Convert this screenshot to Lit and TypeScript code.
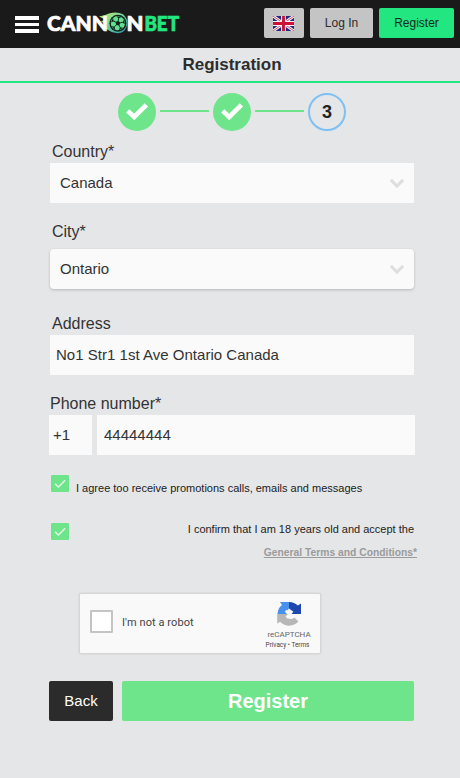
import { LitElement, html, css, svg } from "lit";
import { customElement } from "lit/decorators.js";

const chevron = html`<svg class="chevron" width="16" height="11" viewBox="0 0 16 11">
  <path d="M1.8 1.9 L8 8.1 L14.2 1.9" fill="none" stroke="#dedede" stroke-width="2.9" />
</svg>`;

const stepCheck = html`<svg width="38" height="38" viewBox="0 0 38 38">
  <path d="M9.7 17.8 L16.2 24 L28.4 11.8" fill="none" stroke="#fff" stroke-width="4.6" />
</svg>`;

const smallCheck = html`<svg class="box" width="18" height="17" viewBox="0 0 18 17">
  <rect width="18" height="17" rx="1" fill="#6ee58a" />
  <path d="M4 8.7 L7.4 12 L14.2 5.2" fill="none" stroke="#e6f5e9" stroke-width="1.3" />
</svg>`;

const flag = html`<svg width="21" height="15" viewBox="0 0 22 15" preserveAspectRatio="none">
  <rect width="22" height="15" fill="#1f2a7d" />
  <path d="M0 0 L22 15 M22 0 L0 15" stroke="#f3eef3" stroke-width="3" />
  <path d="M0 0 L22 15 M22 0 L0 15" stroke="#d9506f" stroke-width="1" />
  <path d="M11 0 V15 M0 7.5 H22" stroke="#f8f1f4" stroke-width="5" />
  <path d="M11 0 V15 M0 7.5 H22" stroke="#cc1138" stroke-width="3" />
</svg>`;

const spots = [0, 72, 144, 216, 288].map(
  (a) => svg`<g transform="rotate(${a})">
    <path d="M0 -2.4 V-5" stroke="#10251b" stroke-width=".9" />
    <path d="M-2.5 -6.6 L0 -4.7 L2.5 -6.6 Z" fill="#10251b" />
  </g>`
);

const logo = html`<svg class="logo" width="136" height="34" viewBox="0 -5 136 34">
  <defs>
    <linearGradient id="flame" x1="0" y1="0" x2="1" y2="1">
      <stop offset="0" stop-color="#d4e65a" />
      <stop offset=".4" stop-color="#7fd89a" />
      <stop offset="1" stop-color="#2b8fb0" />
    </linearGradient>
  </defs>
  <path d="M52 4.5 Q58 3.5 62 1.5 Q70 -.6 76 2.2 Q80.5 6 80.3 12 Q79 19 74 20.8 Q67 22.5 61 18 L58 16 L60 13 L54 9.5 L58 7.5 Z" fill="url(#flame)" />
  <g class="wordmark">
    <text class="white" x="0" y="18.9" textLength="61" lengthAdjust="spacingAndGlyphs">CANN</text>
    <text class="white" x="79.4" y="18.9" textLength="17" lengthAdjust="spacingAndGlyphs">N</text>
    <text class="green" x="97.4" y="18.9" textLength="34.6" lengthAdjust="spacingAndGlyphs">BET</text>
  </g>
  <circle cx="70.9" cy="11.2" r="8.5" fill="#10251b" />
  <g transform="translate(70.9 11.2) rotate(8)">
    <circle r="7.1" fill="#62df91" />
    <path d="M0 -2.6 L2.5 -.8 L1.5 2.1 L-1.5 2.1 L-2.5 -.8 Z" fill="#10251b" />
    ${spots}
  </g>
</svg>`;

const recaptcha = html`<svg width="26" height="26" viewBox="0 0 26 26">
  <path d="M13 1 H4 L6 4 A12 12 0 0 0 1.5 13 H11 L8.8 10.8 Q10 8.6 11.5 9.2 L13 7.6 Z" fill="#4a90ee" />
  <path d="M13 1 A12 12 0 0 1 21.8 4.6 L25 2.4 V13 H15.5 L17.4 10.8 L13 7.6 Z" fill="#1f47ad" />
  <path d="M1.2 13 V22.6 L4.2 20.8 A12 12 0 0 0 22.4 20.4 L18.4 16.4 Q16.5 18.4 13.2 17.8 Q10.6 17.6 9.6 15.8 L12 13 Z" fill="#b7b7b7" />
</svg>`;

@customElement("app-root")
export class AppRoot extends LitElement {
  static styles = css`
    :host {
      display: block;
      height: 778px;
      background: #e5e6e8;
      color: #333;
      font-family: "Liberation Sans", Arial, sans-serif;
      overflow: hidden;
    }
    * { box-sizing: border-box; }
    svg { display: block; flex: none; }
    header {
      display: flex;
      height: 48px;
      padding: 8px 6px 0 15px;
      background: #1a1a1a;
    }
    .burger { display: grid; gap: 3px; width: 24px; margin-top: 8px; height: 17px; }
    .burger i { background: #fff; }
    .logo { margin: -1px 0 0 8px; overflow: visible; }
    .wordmark { font: 900 21px Lato, sans-serif; stroke-width: 0.7px; }
    .white { fill: #fff; stroke: #fff; }
    .green { fill: #24e680; stroke: #24e680; }
    .actions { display: flex; gap: 6px; margin-left: auto; height: 30px; }
    .btn {
      display: flex;
      align-items: center;
      justify-content: center;
      border-radius: 2px;
      background: #c4c4c4;
      color: #2b2b2b;
      font-size: 12px;
    }
    .lang { width: 40px; padding: 1px 1px 0 0; }
    .login { width: 63px; }
    .join { width: 75px; background: #22e680; color: #17281f; }
    h1 {
      margin: 0;
      height: 35px;
      padding-left: 4px;
      border-bottom: 2px solid #24e680;
      font-size: 17px;
      line-height: 33px;
      text-align: center;
      color: #2d2d2d;
    }
    .steps {
      display: flex;
      align-items: center;
      padding: 10px 0 0 118px;
      height: 48px;
    }
    .step { width: 38px; height: 38px; border-radius: 50%; background: #6ee58a; }
    .line { width: 49px; height: 2px; margin: -2px 4px 0; background: #6ee58a; }
    .current {
      display: flex;
      align-items: center;
      justify-content: center;
      border: 2px solid #7cc0f5;
      background: none;
      font-size: 18px;
      font-weight: bold;
      color: #222;
    }
    form { padding: 10px 46px 0 50px; }
    label { display: block; height: 20px; line-height: 22px; padding-left: 2px; font-size: 16px; }
    .field {
      display: flex;
      align-items: center;
      justify-content: space-between;
      height: 40px;
      padding: 0 9px 0 10px;
      background: #fafafa;
      font-size: 15px;
    }
    .value { padding-bottom: 2px; }
    .country { margin: 2px 0 18px; }
    .city { margin: 8px 0 24px; border-radius: 4px; box-shadow: 0 1px 3px rgba(0, 0, 0, 0.2); }
    .address { margin: 2px 0 18px; padding-left: 6px; letter-spacing: 0.02px; }
    .phone-label { padding-left: 0; }
    .phone { display: flex; gap: 5px; margin: 2px -1px 0; }
    .code { width: 43px; padding: 0 4px; }
    .number { flex: 1; padding-left: 7px; }
    .consent { display: flex; font-size: 11px; line-height: 14px; padding-left: 1px; color: #222; }
    .promo { margin-top: 20px; height: 48px; }
    .promo span { margin: 6px 0 0 7px; }
    .adult { justify-content: space-between; height: 23px; }
    .adult span { margin-top: -1px; }
    .terms {
      display: block;
      margin-right: -3px;
      text-align: right;
      font-size: 10.3px;
      line-height: 14px;
      font-weight: bold;
      color: #9b9b9b;
      text-decoration: underline;
    }
    .captcha {
      display: flex;
      width: 242px;
      height: 61px;
      margin: 33px 0 0 29px;
      border: 1px solid #d6d6d6;
      border-radius: 2px;
      background: #f9f9f9;
      box-shadow: 0 0 2px rgba(0, 0, 0, 0.12);
      font-family: Roboto, sans-serif;
    }
    .tick { width: 23px; height: 23px; margin: 16px 0 0 10px; border: 2px solid #c4c4c4; border-radius: 1px; background: #fff; }
    .robot { margin: 21px 0 0 9px; font-size: 11px; line-height: 16px; color: #444; letter-spacing: 0.08px; }
    .brand { display: flex; flex-direction: column; align-items: center; width: 60px; margin: 7px 1px 0 auto; white-space: nowrap; }
    .name { margin-top: 3px; font-size: 8px; line-height: 10px; color: #666; }
    .legal { font-size: 6.4px; line-height: 9px; margin-right: 3px; color: #444; margin-top: 1px; }
    .buttons { display: flex; gap: 9px; margin: 27px 0 0 -1px; height: 40px; }
    .back { width: 64px; background: #2b2b2b; color: #fff; font-size: 15px; padding-bottom: 1px; }
    .submit { flex: 1; background: #6ee58a; color: #fff; font-size: 20px; font-weight: bold; }
  `;

  render() {
    return html`
      <header>
        <div class="burger"><i></i><i></i><i></i></div>
        ${logo}
        <div class="actions">
          <div class="btn lang">${flag}</div>
          <div class="btn login">Log In</div>
          <div class="btn join">Register</div>
        </div>
      </header>
      <h1>Registration</h1>
      <div class="steps">
        <div class="step">${stepCheck}</div>
        <div class="line"></div>
        <div class="step">${stepCheck}</div>
        <div class="line"></div>
        <div class="step current">3</div>
      </div>
      <form>
        <label>Country*</label>
        <div class="field country"><span class="value">Canada</span>${chevron}</div>
        <label>City*</label>
        <div class="field city"><span class="value">Ontario</span>${chevron}</div>
        <label>Address</label>
        <div class="field address"><span class="value">No1 Str1 1st Ave Ontario Canada</span></div>
        <label class="phone-label">Phone number*</label>
        <div class="phone">
          <div class="field code"><span class="value">+1</span></div>
          <div class="field number"><span class="value">44444444</span></div>
        </div>
        <div class="consent promo">${smallCheck}<span>I agree too receive promotions calls, emails and messages</span></div>
        <div class="consent adult">${smallCheck}<span>I confirm that I am 18 years old and accept the</span></div>
        <a class="terms">General Terms and Conditions*</a>
        <div class="captcha">
          <div class="tick"></div>
          <div class="robot">I'm not a robot</div>
          <div class="brand">
            ${recaptcha}
            <div class="name">reCAPTCHA</div>
            <div class="legal">Privacy • Terms</div>
          </div>
        </div>
        <div class="buttons">
          <div class="btn back">Back</div>
          <div class="btn submit">Register</div>
        </div>
      </form>
    `;
  }
}
